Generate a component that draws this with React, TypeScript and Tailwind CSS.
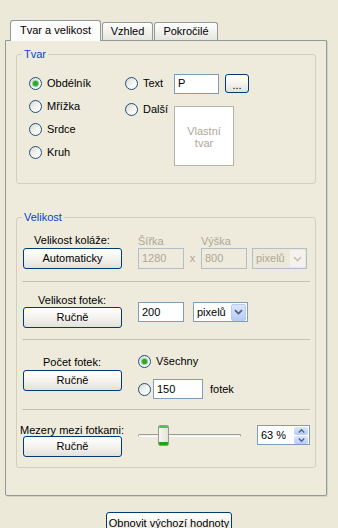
import React from "react";

type BoxProps = { children?: React.ReactNode; className?: string };

function Radio({ checked = false }: { checked?: boolean }) {
  return (
    <span className="flex size-[13px] shrink-0 items-center justify-center rounded-full border border-[#1c5180] bg-gradient-to-br from-[#d8d7cf] via-[#f3f3ee] to-[#ffffff]">
      {checked && <span className="size-[5px] rounded-full bg-[#2fa52f] shadow-[0_0_0_1px_#8fd08f]" />}
    </span>
  );
}

function RadioLabel({ label, checked }: { label: string; checked?: boolean }) {
  return (
    <span className="flex items-center gap-[5px]">
      <Radio checked={checked} />
      <span>{label}</span>
    </span>
  );
}

function XpButton({ children, className = "" }: BoxProps) {
  return (
    <div
      className={`flex shrink-0 items-center justify-center rounded-[3px] border border-[#003c74] bg-gradient-to-b from-[#ffffff] via-[#f4f3ee] to-[#e3e1d8] ${className}`}
    >
      {children}
    </div>
  );
}

function TextBox({ children, className = "" }: BoxProps) {
  return (
    <div className={`flex shrink-0 items-center border border-[#7f9db9] bg-white pl-[3px] ${className}`}>
      {children}
    </div>
  );
}

function Chevron({ color }: { color: string }) {
  return (
    <svg width="9" height="6" viewBox="0 0 9 6">
      <path d="M1 1.2 L4.5 4.6 L8 1.2" fill="none" stroke={color} strokeWidth="1.8" />
    </svg>
  );
}

function Select({ disabled = false, className = "" }: { disabled?: boolean; className?: string }) {
  return (
    <div
      className={`flex shrink-0 items-center justify-between border pl-[3px] pr-px ${
        disabled ? "border-[#b4bec8] bg-[#ece9d8] text-[#aca899]" : "border-[#7f9db9] bg-white"
      } ${className}`}
    >
      <span>pixelů</span>
      {disabled ? (
        <span className="flex h-[17px] w-[15px] items-center justify-center rounded-[2px] bg-[#f3f2ec]">
          <Chevron color="#c9c7ba" />
        </span>
      ) : (
        <span className="flex h-[17px] w-[15px] items-center justify-center rounded-[2px] border border-[#b8cbf3] bg-gradient-to-b from-[#dce6fd] to-[#b7cbf8]">
          <Chevron color="#4d6185" />
        </span>
      )}
    </div>
  );
}

function Spinner() {
  return (
    <div className="flex h-[20px] w-[53px] shrink-0 items-center justify-between border border-[#7f9db9] bg-white pl-[3px] pr-px">
      <span>63 %</span>
      <span className="flex h-[17px] w-[14px] flex-col gap-px">
        <span className="flex flex-1 items-center justify-center rounded-[2px] bg-gradient-to-b from-[#dce6fd] to-[#b7cbf8]">
          <svg width="7" height="4" viewBox="0 0 7 4">
            <path d="M0.8 3.4 L3.5 0.8 L6.2 3.4" fill="none" stroke="#4d6185" strokeWidth="1.4" />
          </svg>
        </span>
        <span className="flex flex-1 items-center justify-center rounded-[2px] bg-gradient-to-b from-[#dce6fd] to-[#b7cbf8]">
          <svg width="7" height="4" viewBox="0 0 7 4">
            <path d="M0.8 0.6 L3.5 3.2 L6.2 0.6" fill="none" stroke="#4d6185" strokeWidth="1.4" />
          </svg>
        </span>
      </span>
    </div>
  );
}

function Slider() {
  return (
    <div className="relative h-[21px] w-[103px] shrink-0">
      <div className="absolute left-0 right-0 top-[9px] h-[3px] rounded-full border border-[#9d9c99] border-b-white bg-[#f3f2ec]" />
      <div className="absolute left-[20px] top-0 flex h-[21px] w-[11px] flex-col overflow-hidden rounded-[2px] border border-[#9a9a92] bg-gradient-to-r from-[#f7f7f3] to-[#e2e1da]">
        <span className="h-[2px] bg-[#52c152]" />
        <span className="flex-1" />
        <span className="h-[3px] bg-[#21a121]" />
      </div>
    </div>
  );
}

function Fieldset({ legend, children, className = "" }: { legend: string } & BoxProps) {
  return (
    <fieldset className={`ml-[10px] w-[300px] rounded-[3px] border border-[#d0d0bf] ${className}`}>
      <legend className="ml-[5px] px-[2px] leading-[13px] text-[#0046d5]">{legend}</legend>
      {children}
    </fieldset>
  );
}

function ButtonColumn({ label, button, className = "", labelClass = "" }: { label: string; button: string; className?: string; labelClass?: string }) {
  return (
    <div className={`flex w-[100px] shrink-0 flex-col items-center ${className}`}>
      <span className={`whitespace-nowrap leading-[13px] ${labelClass}`}>{label}</span>
      <XpButton className="ml-px h-[21px] w-[99px]">{button}</XpButton>
    </div>
  );
}

export default function App() {
  return (
    <div className="h-[528px] w-[338px] overflow-hidden bg-[#ece9d8] pt-[20px] font-['Liberation_Sans',Arial,sans-serif] text-[11px] leading-[13px] text-black">
      {/* tabs */}
      <div className="flex items-end pl-[10px]">
        <div className="relative z-10 -mb-px flex h-[21px] w-[91px] items-center justify-center rounded-t-[3px] border border-b-0 border-[#919b9c] bg-[#fcfcfa] pb-px">
          Tvar a velikost
        </div>
        <div className="ml-px flex h-[18px] w-[51px] items-center justify-center rounded-t-[3px] border border-b-0 border-[#919b9c] bg-gradient-to-b from-[#ffffff] to-[#e6e5dd]">
          Vzhled
        </div>
        <div className="ml-px flex h-[18px] w-[64px] items-center justify-center rounded-t-[3px] border border-b-0 border-[#919b9c] bg-gradient-to-b from-[#ffffff] to-[#e6e5dd]">
          Pokročilé
        </div>
      </div>

      {/* panel */}
      <div className="ml-[5px] h-[456px] w-[322px] rounded-b-[2px] border border-[#919b9c] bg-[#eeebdc] shadow-[1px_1px_0_#d6d3c4]">
        <Fieldset legend="Tvar" className="mt-[7px] h-[136px]">
          <div className="flex pl-[12px] pt-[11px]">
            <div className="flex w-[96px] flex-col">
              {["Obdélník", "Mřížka", "Srdce", "Kruh"].map((l, i) => (
                <div key={l} className="flex h-[23px] items-center">
                  <RadioLabel label={l} checked={i === 0} />
                </div>
              ))}
            </div>
            <div className="flex flex-col">
              <div className="flex h-[23px] items-center">
                <div className="flex w-[49px]">
                  <RadioLabel label="Text" />
                </div>
                <TextBox className="h-[20px] w-[45px]">P</TextBox>
                <XpButton className="ml-[6px] h-[19px] w-[24px]">
                  <span className="pt-[3px]">...</span>
                </XpButton>
              </div>
              <div className="flex">
                <div className="mt-[8px] flex h-[13px] w-[49px]">
                  <RadioLabel label="Další" />
                </div>
                <div className="mt-[11px] flex h-[60px] w-[60px] flex-col items-center justify-center border border-[#b5b5ab] bg-white pt-[2px] leading-[12px] text-[#aca899]">
                  <span>Vlastní</span>
                  <span>tvar</span>
                </div>
              </div>
            </div>
          </div>
        </Fieldset>

        <Fieldset legend="Velikost" className="mt-[27px]">
          {/* velikost koláže */}
          <div className="mx-[5px] flex h-[58px] border-b border-[#c5c2b2]">
            <ButtonColumn label="Velikost koláže:" button="Automaticky" className="pt-[10px]" labelClass="mb-px" />
            <div className="ml-[16px] flex flex-col pt-[11px]">
              <div className="flex h-[13px] text-[#aca899]">
                <span className="w-[63px]">Šířka</span>
                <span>Výška</span>
              </div>
              <div className="flex h-[21px] items-center text-[#aca899]">
                <div className="flex h-[21px] w-[46px] items-center border border-[#b4bec8] pl-[3px]">1280</div>
                <span className="w-[17px] text-center">x</span>
                <div className="flex h-[21px] w-[46px] items-center border border-[#b4bec8] pl-[3px]">800</div>
                <Select disabled className="ml-[5px] h-[21px] w-[55px]" />
              </div>
            </div>
          </div>

          {/* velikost fotek */}
          <div className="mx-[5px] flex h-[58px] border-b border-[#c5c2b2]">
            <ButtonColumn label="Velikost fotek:" button="Ručně" className="pt-[12px]" />
            <div className="ml-[16px] flex items-start pt-[20px]">
              <TextBox className="h-[20px] w-[46px]">200</TextBox>
              <Select className="ml-[9px] h-[20px] w-[55px]" />
            </div>
          </div>

          {/* počet fotek */}
          <div className="mx-[5px] flex h-[70px] border-b border-[#c5c2b2]">
            <ButtonColumn label="Počet fotek:" button="Ručně" className="pt-[16px]" labelClass="mb-px" />
            <div className="ml-[16px] flex flex-col pt-[15px]">
              <div className="flex h-[13px]">
                <RadioLabel label="Všechny" checked />
              </div>
              <div className="mt-[11px] flex h-[20px] items-center">
                <Radio />
                <TextBox className="ml-[2px] h-[20px] w-[50px]">150</TextBox>
                <span className="ml-[7px]">fotek</span>
              </div>
            </div>
          </div>

          {/* mezery */}
          <div className="mx-[5px] flex h-[57px]">
            <ButtonColumn label="Mezery mezi fotkami:" button="Ručně" className="pt-[14px]" labelClass="-mb-px" />
            <div className="ml-[16px] flex items-start pt-[15px]">
              <Slider />
              <div className="ml-[16px]">
                <Spinner />
              </div>
            </div>
          </div>
        </Fieldset>
      </div>

      <div className="mt-[16px] flex justify-center">
        <XpButton className="h-[22px] w-[126px] whitespace-nowrap">Obnovit výchozí hodnoty</XpButton>
      </div>
    </div>
  );
}
